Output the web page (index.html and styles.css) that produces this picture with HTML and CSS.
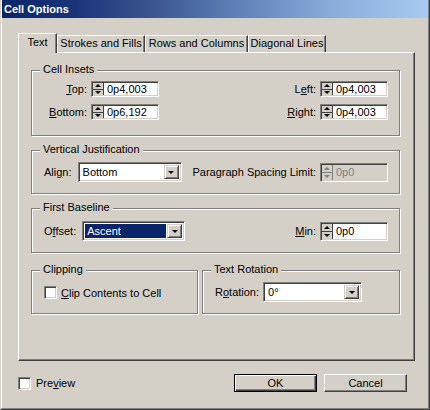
FILE: index.html
```html
<!DOCTYPE html>
<html lang="en">

<head>
    <meta charset="UTF-8">
    <title>Cell Options</title>
    <link rel="stylesheet" href="styles.css">
</head>

<body>

    <div class="window">
        <div class="frame">
            <div class="titlebar">Cell Options</div>

            <div class="dialog-body">
                <!-- Tabs -->
                <div class="tabs">
                    <div class="tab tab-text active">Text</div>
                    <div class="tab tab-strokes">Strokes and Fills</div>
                    <div class="tab tab-rows">Rows and Columns</div>
                    <div class="tab tab-diagonal">Diagonal Lines</div>
                </div>

                <div class="panel">

                    <!-- Cell Insets -->
                    <div class="group insets">
                        <span class="group-title">Cell Insets</span>
                        <div class="row">
                            <div class="field">
                                <label class="inset-label"><u>T</u>op:</label>
                                <div class="spinner compact">
                                    <span class="spin-btns"><span class="spin-up"></span><span class="spin-down"></span></span>
                                    <span class="spin-value">0p4,003</span>
                                </div>
                            </div>
                            <div class="field">
                                <label>L<u>e</u>ft:</label>
                                <div class="spinner compact">
                                    <span class="spin-btns"><span class="spin-up"></span><span class="spin-down"></span></span>
                                    <span class="spin-value">0p4,003</span>
                                </div>
                            </div>
                        </div>
                        <div class="row">
                            <div class="field">
                                <label class="inset-label"><u>B</u>ottom:</label>
                                <div class="spinner compact">
                                    <span class="spin-btns"><span class="spin-up"></span><span class="spin-down"></span></span>
                                    <span class="spin-value">0p6,192</span>
                                </div>
                            </div>
                            <div class="field">
                                <label><u>R</u>ight:</label>
                                <div class="spinner compact">
                                    <span class="spin-btns"><span class="spin-up"></span><span class="spin-down"></span></span>
                                    <span class="spin-value">0p4,003</span>
                                </div>
                            </div>
                        </div>
                    </div>

                    <!-- Vertical Justification -->
                    <div class="group justification">
                        <span class="group-title">Vertical Justification</span>
                        <div class="row">
                            <div class="field wide-gap">
                                <label>Ali<u>g</u>n:</label>
                                <div class="combo align-combo">
                                    <span class="combo-value">Bottom</span>
                                    <span class="combo-btn"></span>
                                </div>
                            </div>
                            <div class="field">
                                <label>Paragraph Spacing Limit:</label>
                                <div class="spinner disabled">
                                    <span class="spin-btns"><span class="spin-up"></span><span class="spin-down"></span></span>
                                    <span class="spin-value">0p0</span>
                                </div>
                            </div>
                        </div>
                    </div>

                    <!-- First Baseline -->
                    <div class="group baseline">
                        <span class="group-title">First Baseline</span>
                        <div class="row">
                            <div class="field wide-gap">
                                <label>O<u>f</u>fset:</label>
                                <div class="combo offset-combo">
                                    <span class="combo-value selected">Ascent</span>
                                    <span class="combo-btn"></span>
                                </div>
                            </div>
                            <div class="field">
                                <label><u>M</u>in:</label>
                                <div class="spinner">
                                    <span class="spin-btns"><span class="spin-up"></span><span class="spin-down"></span></span>
                                    <span class="spin-value">0p0</span>
                                </div>
                            </div>
                        </div>
                    </div>

                    <!-- Clipping + Text Rotation -->
                    <div class="group-row">
                        <div class="group clipping">
                            <span class="group-title">Clipping</span>
                            <label class="check-label"><span class="checkbox"></span><span><u>C</u>lip Contents to Cell</span></label>
                        </div>
                        <div class="group rotation">
                            <span class="group-title">Text Rotation</span>
                            <div class="field">
                                <label>R<u>o</u>tation:</label>
                                <div class="combo rotation-combo">
                                    <span class="combo-value">0°</span>
                                    <span class="combo-btn"></span>
                                </div>
                            </div>
                        </div>
                    </div>

                </div>

                <!-- Footer -->
                <div class="footer">
                    <label class="check-label preview"><span class="checkbox"></span><span>Pre<u>v</u>iew</span></label>
                    <div class="buttons">
                        <button class="btn default">OK</button>
                        <button class="btn">Cancel</button>
                    </div>
                </div>
            </div>
        </div>
    </div>

</body>

</html>
```

FILE: styles.css
```css
body {
    margin: 0;
    background-color: #d4d0c8;
    font-family: "Liberation Sans", Arial, sans-serif;
    font-size: 11px;
    color: #000;
}

/* Window frame */
.window {
    width: 430px;
    height: 410px;
    box-sizing: border-box;
    border: 1px solid;
    border-color: #d4d0c8 #404040 #404040 #d4d0c8;
    border-top: none;
}

.frame {
    height: 100%;
    box-sizing: border-box;
    border: 1px solid;
    border-color: #fff #808080 #808080 #fff;
    border-top: none;
}

.titlebar {
    height: 18px;
    line-height: 18px;
    padding-left: 2px;
    background: linear-gradient(to right, #0a246a 0%, #1a3478 17%, #3a5590 35%, #5f80b8 55%, #8cacda 78%, #a6caf0 100%);
    color: #fff;
    font-weight: bold;
}

.dialog-body {
    padding: 15px 13px 0 16px;
}

/* Tabs */
.tabs {
    display: flex;
    align-items: flex-end;
    height: 19px;
}

.tab {
    box-sizing: border-box;
    height: 17px;
    line-height: 15px;
    text-align: center;
    white-space: nowrap;
    border-top: 1px solid #fff;
    border-left: 1px solid #fff;
    border-right: 1px solid #404040;
    box-shadow: inset -1px 0 0 #808080;
}

.tab.active {
    position: relative;
    z-index: 1;
    height: 20px;
    margin-bottom: -1px;
    line-height: 17px;
    background-color: #d4d0c8;
}

.tab-text { width: 39px; }
.tab-strokes { width: 88px; }
.tab-rows { width: 103px; }
.tab-diagonal { width: 78px; }

/* Tab panel */
.panel {
    box-sizing: border-box;
    height: 309px;
    padding: 17px 14px 0 12px;
    border: 1px solid;
    border-color: #fff #404040 #404040 #fff;
    box-shadow: inset -1px -1px 0 #808080;
}

/* Etched group boxes */
.group {
    position: relative;
    box-sizing: border-box;
    border: 1px solid #808080;
    box-shadow: 1px 1px 0 #fff, inset 1px 1px 0 #fff;
    padding: 0 11px 0 12px;
}

.group-title {
    position: absolute;
    top: -8px;
    left: 8px;
    padding: 0 3px;
    line-height: 13px;
    background-color: #d4d0c8;
    white-space: nowrap;
}

.insets {
    height: 66px;
    padding-top: 10px;
}

.insets .row + .row {
    margin-top: 7px;
}

.justification {
    height: 44px;
    margin-top: 14px;
    padding-top: 11px;
}

.baseline {
    height: 45px;
    margin-top: 14px;
    padding-top: 12px;
}

.group-row {
    display: flex;
    gap: 4px;
    margin-top: 17px;
}

.clipping {
    width: 167px;
    height: 44px;
    padding-top: 15px;
}

.rotation {
    flex: 1;
    height: 44px;
    padding-top: 11px;
}

.row {
    display: flex;
    justify-content: space-between;
    align-items: center;
}

.field {
    display: flex;
    align-items: center;
    gap: 4px;
}

.field.wide-gap {
    gap: 6px;
}

.inset-label {
    width: 43px;
    text-align: right;
}

u {
    text-decoration-thickness: 1px;
    text-underline-offset: 1px;
}

/* Sunken controls */
.spinner,
.combo,
.checkbox {
    box-sizing: border-box;
    border: 1px solid;
    border-color: #808080 #fff #fff #808080;
    box-shadow: inset 1px 1px 0 #404040, inset -1px -1px 0 #d4d0c8;
    background-color: #fff;
}

.spinner {
    display: flex;
    width: 68px;
    height: 19px;
    padding: 1px;
}

.spinner.compact {
    height: 16px;
}

.spin-btns {
    display: flex;
    flex-direction: column;
    width: 10px;
    margin-right: 3px;
    border-right: 1px solid #404040;
}

.spin-up,
.spin-down {
    flex: 1;
    display: flex;
    align-items: center;
    justify-content: center;
    background-color: #d4d0c8;
}

.spin-up {
    border-bottom: 1px solid #404040;
}

.spin-up::after,
.spin-down::after {
    content: "";
    border-left: 3px solid transparent;
    border-right: 3px solid transparent;
}

.spin-up::after {
    border-bottom: 3px solid #000;
}

.spin-down::after {
    border-top: 3px solid #000;
}

.spin-value {
    flex: 1;
    display: flex;
    align-items: center;
    white-space: nowrap;
}

.spinner.disabled {
    background-color: #d4d0c8;
    color: #808080;
}

.spinner.disabled .spin-btns,
.spinner.disabled .spin-up {
    border-color: #808080;
}

.spinner.disabled .spin-up::after {
    border-bottom-color: #808080;
}

.spinner.disabled .spin-down::after {
    border-top-color: #808080;
}

/* Drop-down combos */
.combo {
    display: flex;
    height: 20px;
    padding: 2px;
}

.align-combo { width: 104px; }
.offset-combo { width: 103px; }
.rotation-combo { width: 99px; }

.combo-value {
    flex: 1;
    display: flex;
    align-items: center;
    padding-left: 2px;
    margin-right: 1px;
}

.combo-value.selected {
    background-color: #0a246a;
    color: #fff;
}

.combo-btn {
    width: 15px;
    display: flex;
    align-items: center;
    justify-content: center;
    box-sizing: border-box;
    background-color: #d4d0c8;
    border: 1px solid;
    border-color: #d4d0c8 #404040 #404040 #d4d0c8;
    box-shadow: inset 1px 1px 0 #fff, inset -1px -1px 0 #808080;
}

.combo-btn::after {
    content: "";
    border-left: 3px solid transparent;
    border-right: 3px solid transparent;
    border-top: 3px solid #000;
    margin-top: 1px;
}

/* Checkboxes */
.check-label {
    display: flex;
    align-items: center;
    gap: 4px;
}

.checkbox {
    width: 13px;
    height: 13px;
}

.preview {
    gap: 5px;
}

/* Footer */
.footer {
    display: flex;
    align-items: center;
    justify-content: space-between;
    padding: 13px 8px 0 0;
}

.buttons {
    display: flex;
    gap: 7px;
}

.btn {
    box-sizing: border-box;
    width: 83px;
    height: 18px;
    padding: 0;
    font-family: inherit;
    font-size: 11px;
    color: #000;
    background-color: #d4d0c8;
    border: 1px solid;
    border-color: #fff #404040 #404040 #fff;
    box-shadow: inset -1px -1px 0 #808080;
}

.btn.default {
    border-color: #000;
    box-shadow: inset 1px 1px 0 #fff, inset -1px -1px 0 #404040, inset -2px -2px 0 #808080;
}
```
